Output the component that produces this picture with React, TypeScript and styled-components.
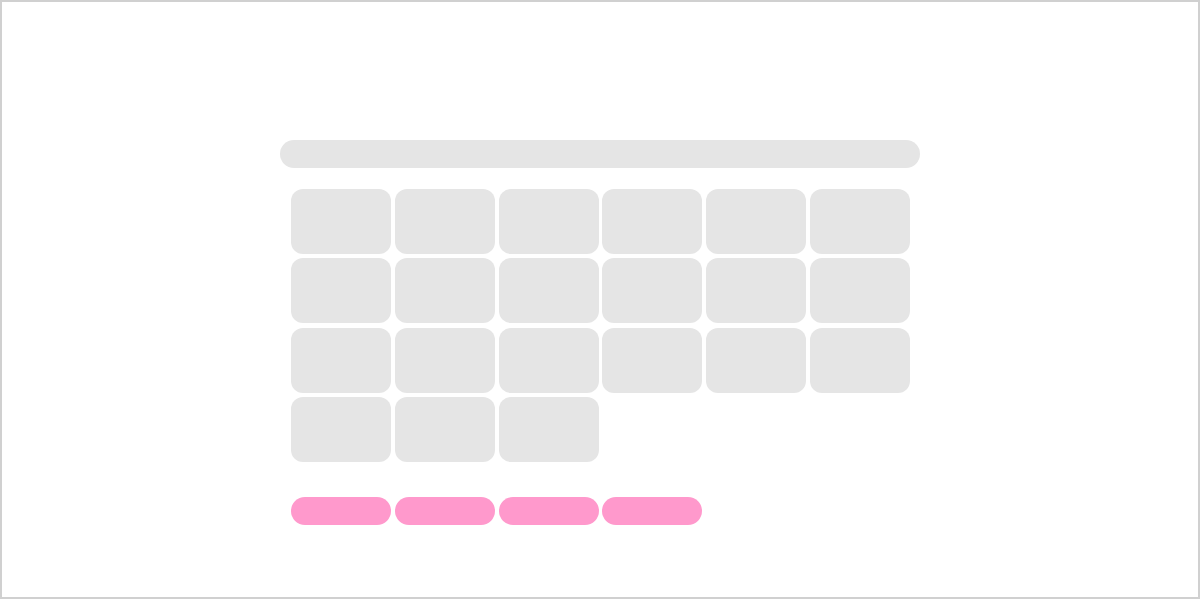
import React from 'react'
import styled, { createGlobalStyle } from 'styled-components'

const GlobalStyle = createGlobalStyle`
    html, body {
        margin: 0;
        padding: 0;
        background: #ffffff;
        font-family: "Liberation Sans", Arial, sans-serif;
    }
`

const Frame = styled.div`
    box-sizing: border-box;
    width: 1200px;
    height: 599px;
    border: 2px solid #d0d0d0;
    background: #ffffff;
    padding-top: 138px;
    display: flex;
    justify-content: center;
`

const Panel = styled.div`
    width: 640px;
    display: flex;
    flex-direction: column;
`

const TopBar = styled.div`
    height: 28px;
    border-radius: 14px;
    background: #e5e5e5;
`

const Grid = styled.div`
    margin: 21px 10px 0 11px;
    display: grid;
    grid-template-columns: repeat(6, 1fr);
    grid-auto-rows: 65px;
    column-gap: 3.8px;
    row-gap: 4.3px;
`

const Cell = styled.div`
    background: #e5e5e5;
    border-radius: 12px;
`

const PillRow = styled.div`
    margin: 35px 10px 0 11px;
    display: grid;
    grid-template-columns: repeat(6, 1fr);
    column-gap: 3.8px;
`

const Pill = styled.div`
    height: 28px;
    border-radius: 14px;
    background: #ff99cc;
`

const cells = Array.from({ length: 21 }, (_, i) => i)
const pills = [0, 1, 2, 3]

export default function App() {
    return (
        <>
            <GlobalStyle />
            <Frame>
                <Panel>
                    <TopBar />
                    <Grid>
                        {cells.map(i => <Cell key={i} />)}
                    </Grid>
                    <PillRow>
                        {pills.map(i => <Pill key={i} />)}
                    </PillRow>
                </Panel>
            </Frame>
        </>
    )
}
